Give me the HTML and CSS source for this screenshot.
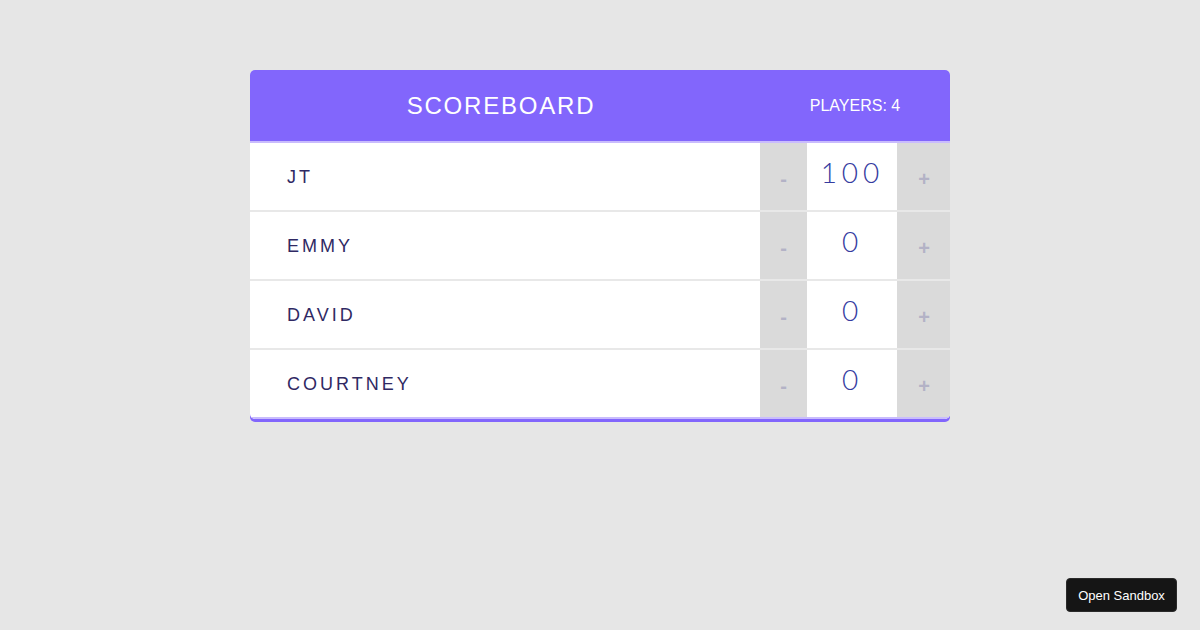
FILE: index.html
```html
<!DOCTYPE html>
<html lang="en">
<head>
<meta charset="utf-8">
<title>Scoreboard</title>
<link rel="stylesheet" href="styles.css">
</head>
<body>
<div class="scoreboard">
  <header class="header">
    <h1 class="title">SCOREBOARD</h1>
    <div class="stats">PLAYERS: 4</div>
  </header>
  <div class="player">
    <span class="player-name">JT</span>
    <div class="counter">
      <button class="counter-action decrement">-</button>
      <span class="counter-score">100</span>
      <button class="counter-action increment">+</button>
    </div>
  </div>
  <div class="player">
    <span class="player-name">EMMY</span>
    <div class="counter">
      <button class="counter-action decrement">-</button>
      <span class="counter-score">0</span>
      <button class="counter-action increment">+</button>
    </div>
  </div>
  <div class="player">
    <span class="player-name">DAVID</span>
    <div class="counter">
      <button class="counter-action decrement">-</button>
      <span class="counter-score">0</span>
      <button class="counter-action increment">+</button>
    </div>
  </div>
  <div class="player last">
    <span class="player-name">COURTNEY</span>
    <div class="counter">
      <button class="counter-action decrement">-</button>
      <span class="counter-score">0</span>
      <button class="counter-action increment">+</button>
    </div>
  </div>
</div>
<button class="sandbox">Open Sandbox</button>
</body>
</html>
```

FILE: styles.css
```css
html, body {
  margin: 0;
  padding: 0;
}
body {
  background: #e6e6e6;
  font-family: "Liberation Sans", Arial, sans-serif;
  min-height: 630px;
}
.scoreboard {
  width: 700px;
  margin: 70px auto 0;
  background: #fff;
  border-radius: 5px;
  box-shadow: 0 3px 0 #8266fc;
  overflow: hidden;
}
.header {
  display: flex;
  align-items: center;
  height: 71px;
  padding: 0 10px;
  background: #8266fc;
  border-bottom: 2px solid #c9bcfd;
  color: #fff;
}
.title {
  flex: 1;
  margin: 0;
  padding-right: 28px;
  text-align: center;
  font-size: 24px;
  font-weight: normal;
  letter-spacing: 1.8px;
}
.stats {
  width: 170px;
  text-align: center;
  font-size: 16px;
}
.player {
  display: flex;
  height: 67px;
  border-bottom: 2px solid #e8e8e8;
}
.player.last {
  border-bottom-color: #c9bcfd;
}
.player-name {
  flex: 1;
  padding: 24px 0 0 37px;
  font-size: 18px;
  letter-spacing: 3px;
  color: #2f2963;
}
.counter {
  display: flex;
  width: 190px;
}
.counter-action {
  border: none;
  margin: 0;
  padding: 0;
  background: #dadada;
  color: #b3b2c6;
  font-family: "Liberation Sans", Arial, sans-serif;
  font-weight: bold;
  font-size: 20px;
  line-height: 1;
  padding-top: 4px;
}
.decrement {
  width: 47px;
}
.increment {
  width: 53px;
  padding-left: 1px;
}
.counter-score {
  flex: 1;
  text-align: center;
  font-family: Lato, "DejaVu Sans", sans-serif;
  font-weight: 300;
  font-size: 28px;
  letter-spacing: 5px;
  text-indent: 1px;
  color: #353c9f;
  padding-top: 12px;
  line-height: normal;
}
.sandbox {
  position: fixed;
  right: 23px;
  bottom: 18px;
  width: 111px;
  height: 34px;
  padding: 0;
  background: #151515;
  border: 1px solid #2a2a2a;
  border-radius: 4px;
  color: #fff;
  font-family: "Liberation Sans", Arial, sans-serif;
  font-size: 13px;
}
```
